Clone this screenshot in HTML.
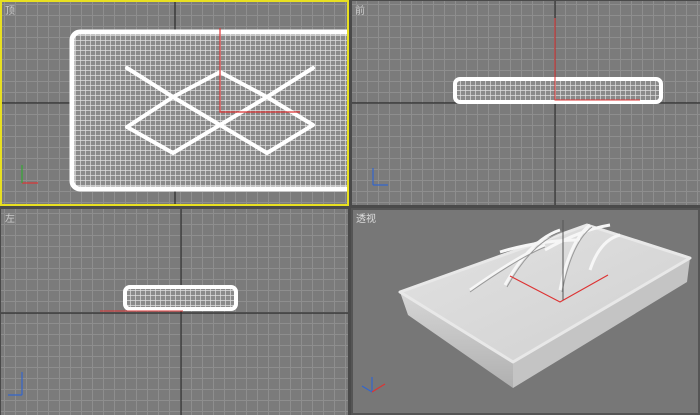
<!DOCTYPE html>
<html><head><meta charset="utf-8"><style>
body{margin:0;width:700px;height:415px;background:#3c3c3c;overflow:hidden;font-family:"Liberation Sans","Noto Sans CJK SC",sans-serif}
svg{display:block}
</style></head><body>
<svg width="700" height="415" xmlns="http://www.w3.org/2000/svg">
<defs>
<pattern id="g" width="11" height="11" patternUnits="userSpaceOnUse" x="4" y="4">
<rect width="11" height="11" fill="#7b7b7b"/>
<path d="M0 0.5H11M0.5 0V11" stroke="#8e8e8e" stroke-width="1"/>
</pattern>
<pattern id="w" width="5" height="5" patternUnits="userSpaceOnUse">
<rect width="5" height="5" fill="#8a8a8a"/>
<path d="M0 0.5H5M0.5 0V5" stroke="#dedede" stroke-width="0.7"/>
</pattern>
<linearGradient id="top" x1="0" y1="0" x2="1" y2="1">
<stop offset="0" stop-color="#e2e2e2"/><stop offset="1" stop-color="#d0d0d0"/>
</linearGradient>
<linearGradient id="side" x1="0" y1="0" x2="0" y2="1">
<stop offset="0" stop-color="#d6d6d6"/><stop offset="1" stop-color="#b0b0b0"/>
</linearGradient>
<clipPath id="c1"><rect x="1" y="1" width="347" height="204"/></clipPath>
</defs>
<rect width="700" height="415" fill="#4a4a4a"/>
<!-- TL -->
<g clip-path="url(#c1)">
<rect x="1" y="1" width="347" height="204" fill="url(#g)"/>
<path d="M175 1V205M1 103H348" stroke="#2a2a2a" stroke-width="1.2"/>
<rect x="72" y="32" width="290" height="157" rx="8" fill="url(#w)" stroke="#fff" stroke-width="5"/>
<path fill="none" d="M127 68L173 97L220 72L267 97L313 68M127 127L173 97L220 125L267 97L313 125M127 127L173 153L220 125L267 153L313 125" stroke="#fff" stroke-width="4" stroke-linecap="round" stroke-linejoin="round"/>
<path fill="none" d="M220 28V112H300" stroke="#d33" stroke-width="1.2"/>
</g>
<rect x="1" y="1" width="347" height="204" fill="none" stroke="#e8e020" stroke-width="2"/>
<text x="5" y="14" font-size="10" fill="#ccc">顶</text>
<path fill="none" d="M22 183H38" stroke="#d33" stroke-width="1.2"/><path fill="none" d="M22 183V165" stroke="#3a3" stroke-width="1.2"/>
<!-- TR -->
<rect x="352" y="1" width="348" height="204" fill="url(#g)"/>
<path fill="none" d="M555 1V205M352 103H700" stroke="#2a2a2a" stroke-width="1.2"/>
<rect x="455" y="79" width="206" height="23" rx="5" fill="url(#w)" stroke="#fff" stroke-width="4"/>
<path fill="none" d="M555 18V100H640" stroke="#d33" stroke-width="1"/>
<text x="355" y="14" font-size="10" fill="#ccc">前</text>
<path fill="none" d="M373 185V168M373 185H388" stroke="#36c" stroke-width="1.2"/>
<!-- BL -->
<rect x="1" y="209" width="347" height="206" fill="url(#g)"/>
<path fill="none" d="M181 209V415M1 313H348" stroke="#2a2a2a" stroke-width="1.2"/>
<rect x="125" y="287" width="111" height="22" rx="5" fill="url(#w)" stroke="#fff" stroke-width="4"/>
<path fill="none" d="M100 311H183" stroke="#d33" stroke-width="1"/>
<text x="5" y="222" font-size="10" fill="#ccc">左</text>
<path fill="none" d="M22 395V372M8 395H22" stroke="#36c" stroke-width="1.2"/>
<!-- BR -->
<rect x="352" y="209" width="348" height="206" fill="#777"/>
<rect x="352" y="209" width="347" height="205" fill="none" stroke="#555" stroke-width="2"/>
<path d="M400 292L513 362L513 388L408 315Z" fill="url(#side)"/>
<path d="M513 362L690 258L687 282L513 388Z" fill="#c4c4c4"/>
<path d="M400 292L587 225L690 258L513 362Z" fill="url(#top)" stroke="#e8e8e8" stroke-width="3" stroke-linejoin="round"/>
<path fill="none" d="M470 290Q520 255 545 245M505 285Q530 240 560 230M500 252Q540 240 580 240M545 250Q580 230 610 225M560 290Q570 240 590 225M590 270Q600 240 620 235" stroke="#f6f6f6" stroke-width="3"/>
<path fill="none" d="M470 292Q520 257 545 247M507 287Q532 242 562 232M562 292Q572 242 592 227" stroke="#999" stroke-width="1"/>
<path fill="none" d="M510 276L560 302L608 275" stroke="#d33" stroke-width="1.2"/>
<path fill="none" d="M563 220V300" stroke="#555" stroke-width="1"/>
<text x="356" y="222" font-size="10" fill="#ddd">透视</text>
<path fill="none" d="M372 392V377M372 392L362 386" stroke="#36c" stroke-width="1.2"/>
<path fill="none" d="M372 392L385 384" stroke="#d33" stroke-width="1.2"/>
</svg>
</body></html>
